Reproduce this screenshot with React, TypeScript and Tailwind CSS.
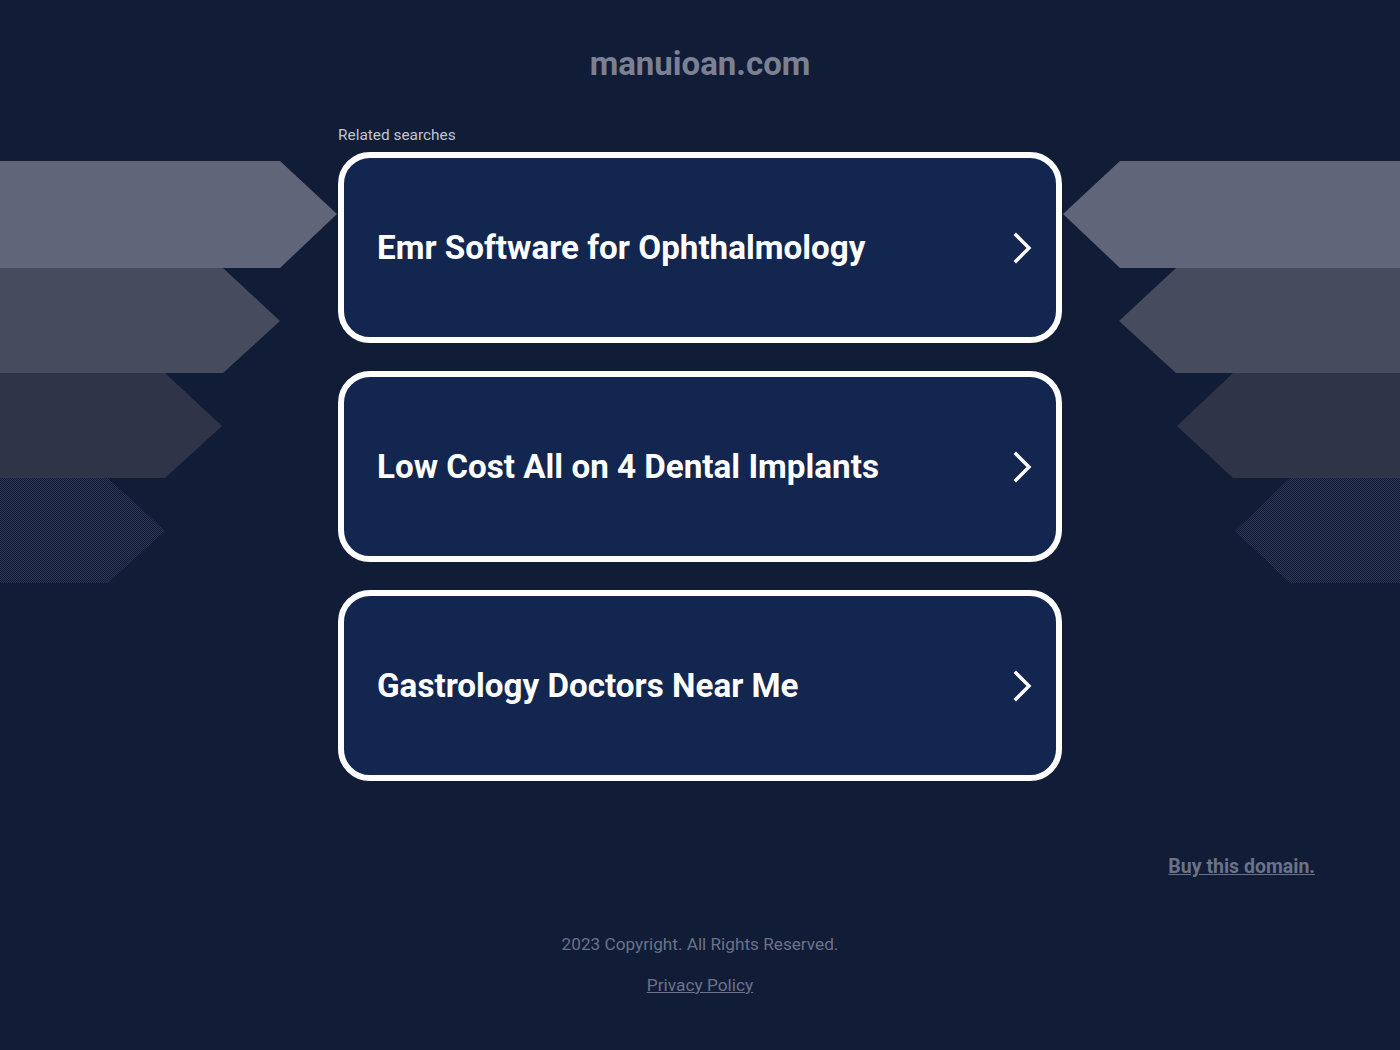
import React from 'react';

const searches = [
  'Emr Software for Ophthalmology',
  'Low Cost All on 4 Dental Implants',
  'Gastrology Doctors Near Me',
];

const Chevron: React.FC = () => (
  <svg width="24" height="32" viewBox="0 0 24 32" fill="none" className="shrink-0">
    <polyline points="6,3 19,16 6,29" stroke="#ffffff" strokeWidth="3.4" strokeLinecap="square" strokeLinejoin="miter" />
  </svg>
);

const LeftBands: React.FC = () => (
  <svg width="340" height="422" viewBox="0 0 340 422" className="absolute left-0 top-[161px]">
    <defs>
      <pattern id="ditherL" width="2" height="2" patternUnits="userSpaceOnUse">
        <rect width="2" height="2" fill="#111c37" />
        <rect width="1" height="1" fill="#2c3554" />
        <rect x="1" y="1" width="1" height="1" fill="#2c3554" />
      </pattern>
    </defs>
    <polygon points="0,0 280,0 337,53 280,107 0,107" fill="#61657a" />
    <polygon points="0,107 223,107 280,160 223,212 0,212" fill="#464b5d" />
    <polygon points="0,212 165,212 222,265 165,317 0,317" fill="#2f3449" />
    <polygon points="0,317 108,317 165,370 108,422 0,422" fill="url(#ditherL)" />
  </svg>
);

const RightBands: React.FC = () => (
  <svg width="340" height="422" viewBox="0 0 340 422" className="absolute right-0 top-[161px]">
    <defs>
      <pattern id="ditherR" width="2" height="2" patternUnits="userSpaceOnUse">
        <rect width="2" height="2" fill="#111c37" />
        <rect width="1" height="1" fill="#2c3554" />
        <rect x="1" y="1" width="1" height="1" fill="#2c3554" />
      </pattern>
    </defs>
    <polygon points="340,0 60,0 3,53 60,107 340,107" fill="#61657a" />
    <polygon points="340,107 116,107 59,160 116,212 340,212" fill="#464b5d" />
    <polygon points="340,212 173,212 117,265 173,317 340,317" fill="#2f3449" />
    <polygon points="340,317 230,317 175,370 230,422 340,422" fill="url(#ditherR)" />
  </svg>
);

const App: React.FC = () => {
  return (
    <div className="relative min-h-[1050px] w-full overflow-hidden bg-[#111c37] font-['Roboto','Liberation_Sans',sans-serif]">
      <LeftBands />
      <RightBands />

      <div className="relative mx-auto w-[724px]">
        <h1 className="pt-[44px] text-center text-[33px] leading-[40px] font-bold text-[#7b8193]">
          manuioan.com
        </h1>

        <div className="mt-[42px] text-[15.4px] leading-[18px] text-[#c2c6ce]">Related searches</div>

        <div className="mt-[8px] flex flex-col gap-[28px]">
          {searches.map((s) => (
            <a
              key={s}
              href="#"
              className="flex h-[191px] items-center justify-between rounded-[32px] border-[6px] border-white bg-[#13264f] pl-[33px] pr-[22px]"
            >
              <span className="text-[33.2px] leading-[40px] font-bold text-white">{s}</span>
              <Chevron />
            </a>
          ))}
        </div>
      </div>

      <div className="relative mt-[74px] flex justify-end pr-[85px]">
        <a href="#" className="text-[19.5px] leading-[24px] font-bold text-[#6b7289] underline">
          Buy this domain.
        </a>
      </div>

      <div className="relative mt-[54px] text-center text-[17.2px] leading-[22px] text-[#6b7289]">
        2023 Copyright. All Rights Reserved.
      </div>
      <div className="relative mt-[19px] text-center">
        <a href="#" className="text-[17.3px] leading-[22px] text-[#6b7289] underline">
          Privacy Policy
        </a>
      </div>
    </div>
  );
};

export default App;
